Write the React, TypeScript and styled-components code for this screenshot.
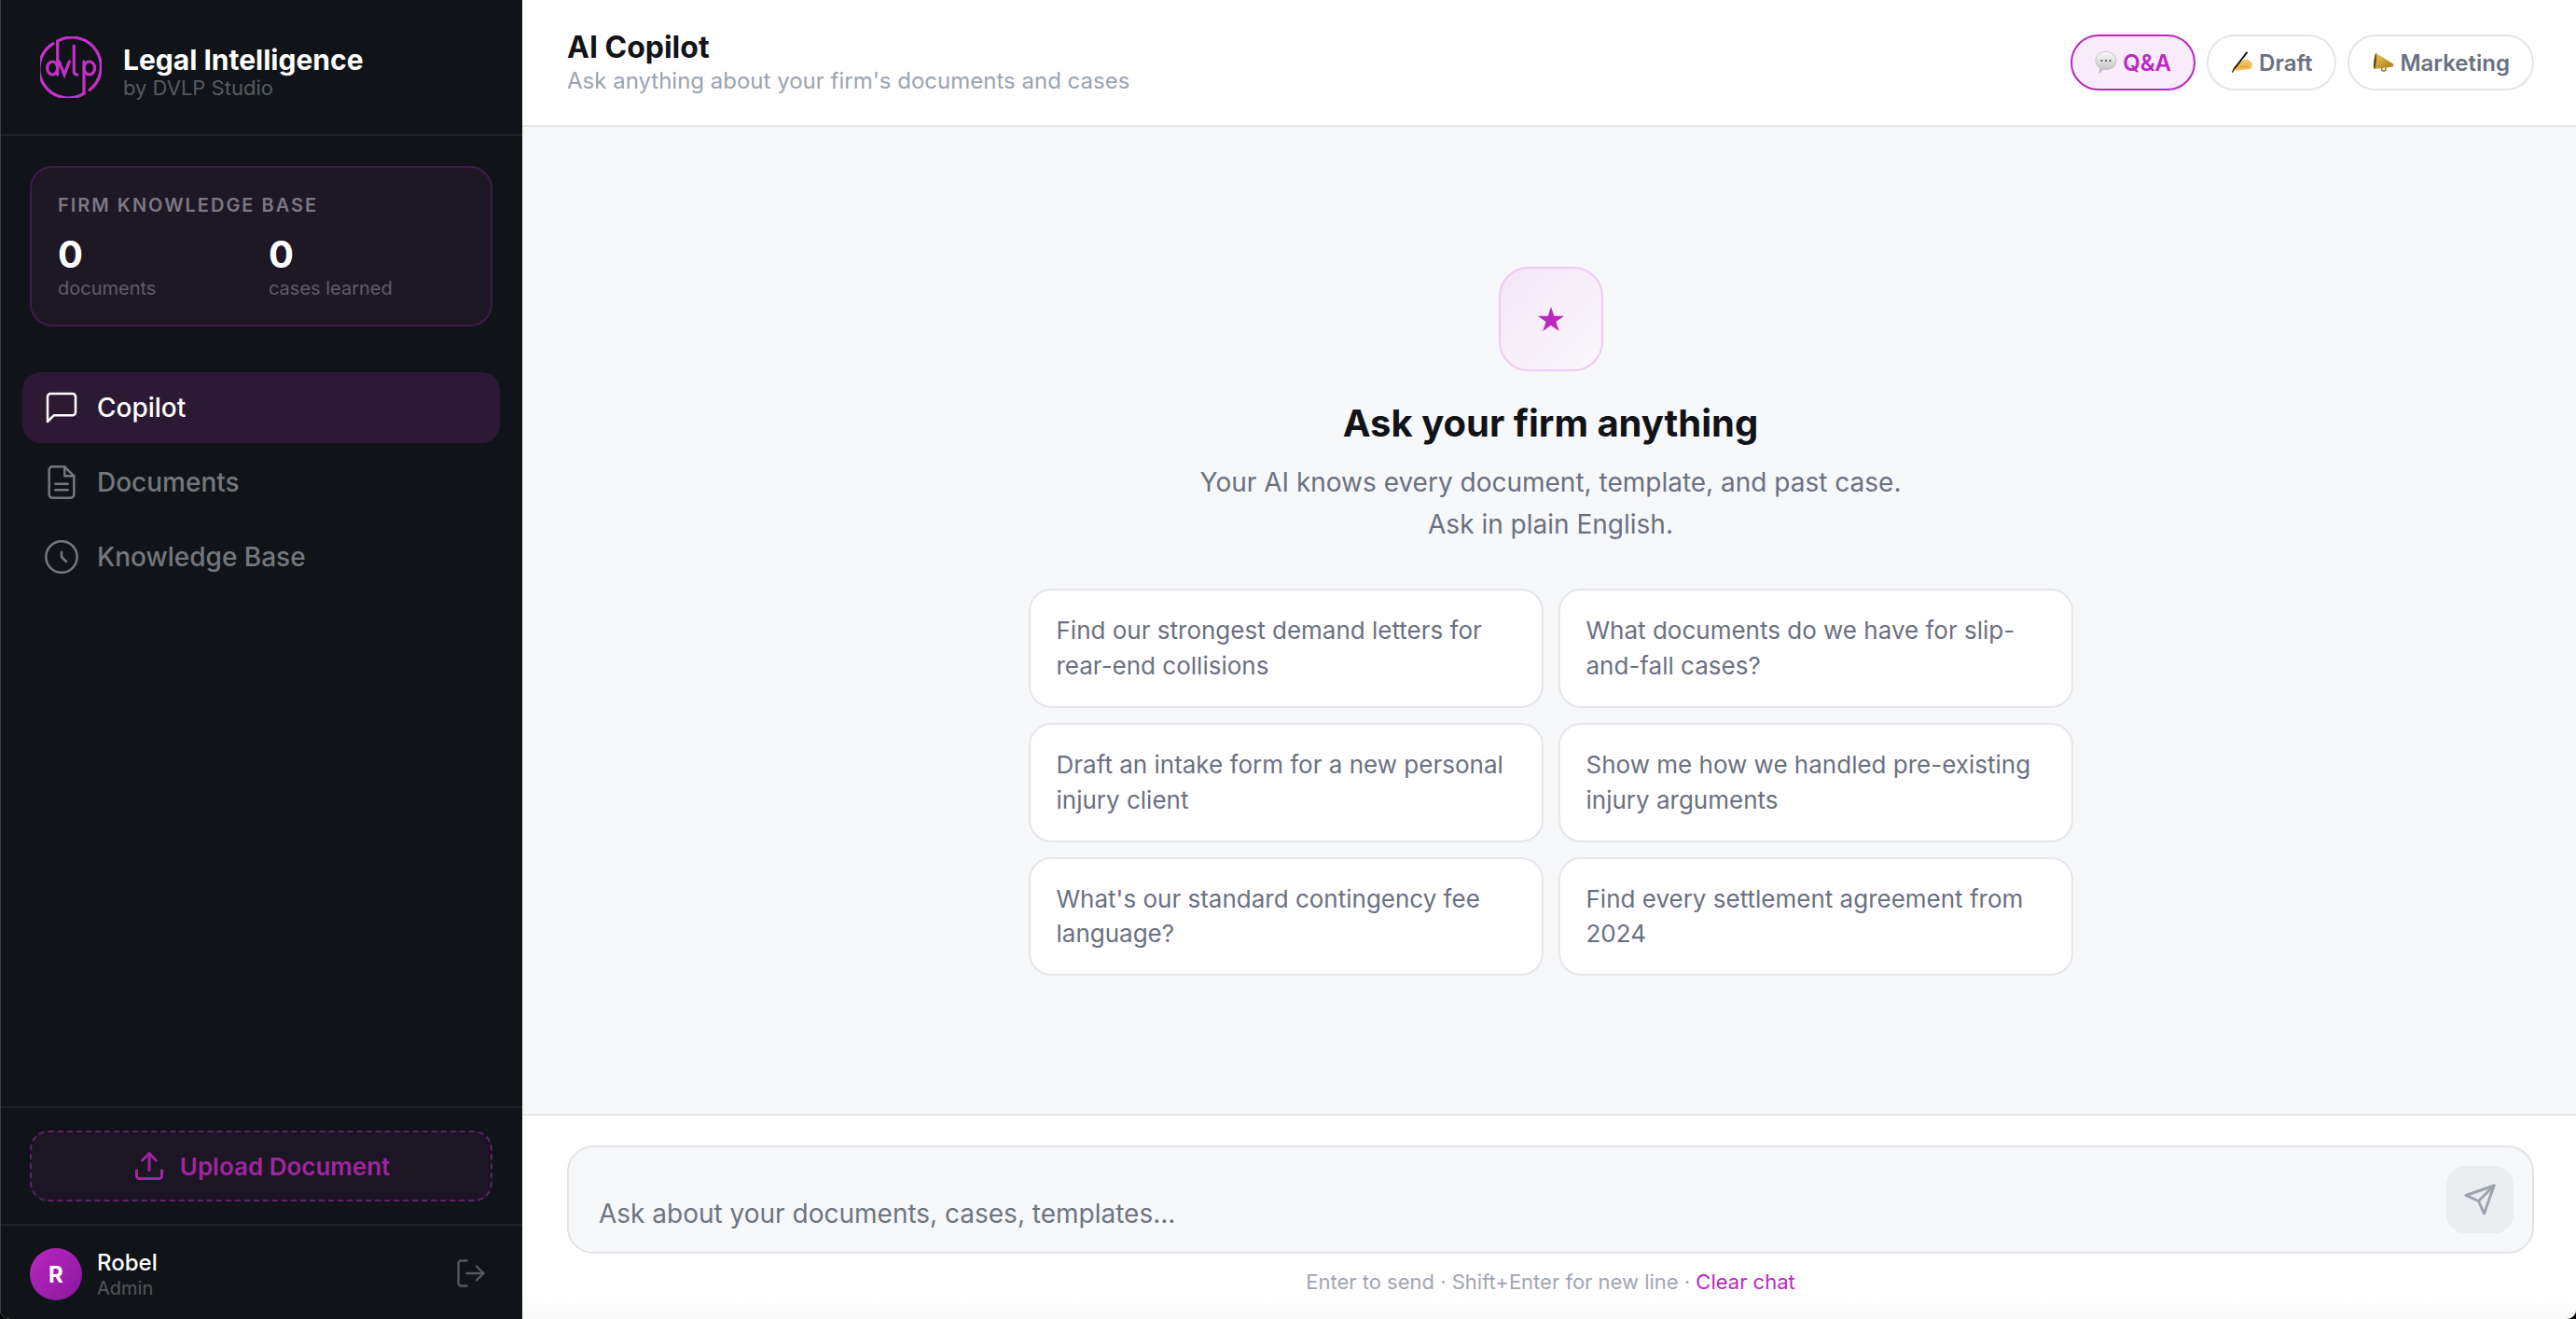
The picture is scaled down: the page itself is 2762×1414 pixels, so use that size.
import styled, { createGlobalStyle } from "styled-components";

const GlobalStyle = createGlobalStyle`
  * {
    box-sizing: border-box;
  }

  html,
  body {
    margin: 0;
    height: 100%;
    overflow: hidden;
    background: #000;
  }

  #root {
    height: 100%;
  }

  body {
    font-family: "Inter", "Liberation Sans", sans-serif;
  }
`;

const Shell = styled.div`
  display: flex;
  height: 1414px;
  overflow: hidden;
  background: #fff;
  border-radius: 0 0 10px 10px;
`;

const Sidebar = styled.aside`
  display: flex;
  flex-direction: column;
  flex: 0 0 560px;
  background: #101418;
  border-left: 1px solid #3c3f44;
`;

const Brand = styled.div`
  display: flex;
  align-items: center;
  gap: 23px;
  height: 146px;
  padding-left: 42px;
  border-bottom: 2px solid #1e2228;
`;

const BrandText = styled.div`
  display: flex;
  flex-direction: column;
  padding-top: 8px;
`;

const BrandName = styled.div`
  font-size: 30px;
  line-height: 36px;
  font-weight: 700;
  color: #fff;
`;

const BrandSub = styled.div`
  font-size: 22px;
  line-height: 24px;
  color: #565a60;
`;

const StatsCard = styled.section`
  margin: 32px 32px 0 31px;
  height: 172px;
  padding: 28px 28px 0;
  background: #1e1724;
  border: 2px solid #401c4c;
  border-radius: 24px;
`;

const StatsLabel = styled.div`
  font-size: 20px;
  line-height: 24px;
  font-weight: 600;
  letter-spacing: 2px;
  color: #7c7884;
`;

const StatsRow = styled.div`
  display: grid;
  grid-template-columns: 226px 1fr;
  margin-top: 17px;
`;

const StatValue = styled.div`
  font-size: 40px;
  line-height: 48px;
  font-weight: 700;
  color: #fff;
`;

const StatCaption = styled.div`
  font-size: 20px;
  line-height: 24px;
  color: #615c68;
`;

const Nav = styled.nav`
  display: flex;
  flex-direction: column;
  gap: 4px;
  flex: 1;
  margin-top: 49px;
  padding: 0 24px 0 23px;
`;

const NavItem = styled.a<{ $active?: boolean }>`
  display: flex;
  align-items: center;
  gap: 18px;
  height: 76px;
  padding-left: 22px;
  border-radius: 20px;
  font-size: 28px;
  font-weight: 500;
  color: ${(p) => (p.$active ? "#fff" : "#75787d")};
  background: ${(p) => (p.$active ? "#2c1a34" : "transparent")};
`;

const UploadSection = styled.div`
  padding: 24px 32px 24px 31px;
  border-top: 2px solid #1e2228;
`;

const UploadButton = styled.button`
  display: flex;
  align-items: center;
  justify-content: center;
  gap: 15px;
  width: 100%;
  height: 76px;
  padding: 0;
  background: #1c1624;
  border: 2px dashed #5e2268;
  border-radius: 20px;
  font-family: inherit;
  font-size: 26px;
  font-weight: 600;
  color: #a0259f;
`;

const UserRow = styled.div`
  display: flex;
  align-items: center;
  gap: 16px;
  padding: 24px 37px 20px 31px;
  border-top: 2px solid #1e2228;
`;

const Avatar = styled.div`
  display: flex;
  align-items: center;
  justify-content: center;
  width: 56px;
  height: 56px;
  border-radius: 50%;
  background: linear-gradient(135deg, #bb27bf, #86189f);
  font-size: 24px;
  font-weight: 700;
  color: #fff;
`;

const UserText = styled.div`
  flex: 1;
`;

const UserName = styled.div`
  font-size: 24px;
  line-height: 30px;
  font-weight: 500;
  color: #fff;
`;

const UserRole = styled.div`
  font-size: 20px;
  line-height: 24px;
  color: #54575c;
`;

const LogoutIcon = styled.span`
  display: flex;
  margin-bottom: 3px;
  color: #55585d;
`;

const Main = styled.main`
  display: flex;
  flex-direction: column;
  flex: 1;
  min-width: 0;
`;

const Header = styled.header`
  display: flex;
  align-items: center;
  justify-content: space-between;
  height: 136px;
  padding: 0 45px 0 48px;
  background: #fff;
  border-bottom: 2px solid #e5e6ea;
`;

const PageTitle = styled.h1`
  margin: 0;
  font-size: 32px;
  line-height: 40px;
  font-weight: 700;
  color: #111318;
`;

const PageSub = styled.p`
  margin: 0;
  font-size: 24px;
  line-height: 32px;
  color: #9ca3af;
`;

const ModeTabs = styled.div`
  display: flex;
  gap: 12px;
`;

const ModeTab = styled.button<{ $active?: boolean }>`
  display: flex;
  align-items: center;
  gap: 6px;
  height: 60px;
  padding: 0 24px;
  border-radius: 30px;
  font-family: inherit;
  font-size: 24px;
  font-weight: 600;
  color: ${(p) => (p.$active ? "#bb27bf" : "#6b7080")};
  background: ${(p) => (p.$active ? "#f8ecfb" : "#fff")};
  border: 2px solid ${(p) => (p.$active ? "#bb27bf" : "#e4e5ea")};
`;

const Welcome = styled.div`
  display: flex;
  flex-direction: column;
  align-items: center;
  justify-content: center;
  flex: 1;
  padding: 2px 0 0 3px;
  background: #f7f8fa;
`;

const StarTile = styled.div`
  display: flex;
  align-items: center;
  justify-content: center;
  width: 112px;
  height: 112px;
  background: linear-gradient(135deg, #f3e6f7, #fbf8fc);
  border: 2px solid #eecbf0;
  border-radius: 32px;
`;

const Heading = styled.h2`
  margin: 32px 0 0;
  font-size: 40px;
  line-height: 48px;
  font-weight: 700;
  color: #111318;
`;

const Lead = styled.p`
  margin: 17px 0 0;
  font-size: 28px;
  line-height: 44.8px;
  text-align: center;
  color: #6b7080;
`;

const Suggestions = styled.div`
  display: grid;
  grid-template-columns: 1fr 1fr;
  gap: 16px;
  width: 1120px;
  margin-top: 47px;
`;

const Suggestion = styled.button`
  padding: 24px 28px;
  background: #fff;
  border: 2px solid #e5e6ea;
  border-radius: 24px;
  font-family: inherit;
  font-size: 26px;
  line-height: 37.8px;
  text-align: left;
  color: #6b7080;
`;

const Composer = styled.footer`
  padding: 32px 45px 0 48px;
  height: 220px;
  background: linear-gradient(#fff 88%, #fafafa);
  border-top: 2px solid #e5e6ea;
`;

const InputBox = styled.div`
  display: flex;
  align-items: flex-end;
  gap: 16px;
  height: 116px;
  padding: 20px 20px 20px 32px;
  background: #f7f8fa;
  border: 2px solid #e3e4e8;
  border-radius: 28px;
`;

const Input = styled.textarea`
  flex: 1;
  height: 44px;
  padding: 3px 0 0;
  border: 0;
  outline: 0;
  resize: none;
  background: transparent;
  font-family: inherit;
  font-size: 28px;
  line-height: 41px;
  color: #111318;

  &::placeholder {
    color: #6f7480;
    opacity: 1;
  }
`;

const SendButton = styled.button`
  display: flex;
  align-items: center;
  justify-content: center;
  flex: 0 0 72px;
  height: 72px;
  padding: 0;
  border: 0;
  border-radius: 20px;
  background: #ecedf1;
  color: #9ca3af;
`;

const Hint = styled.div`
  margin-top: 16px;
  font-size: 22px;
  line-height: 28px;
  text-align: center;
  color: #a2a5b1;
`;

const ClearLink = styled.a`
  color: #bb27bf;
`;

type IconProps = { size: number; width?: number; children: React.ReactNode };

function Icon({ size, width = 1.5, children }: IconProps) {
  return (
    <svg
      width={size}
      height={size}
      viewBox="0 0 24 24"
      fill="none"
      stroke="currentColor"
      strokeWidth={width}
      strokeLinecap="round"
      strokeLinejoin="round"
    >
      {children}
    </svg>
  );
}

function DvlpLogo() {
  return (
    <svg width="66" height="66" viewBox="0 0 66 66" fill="none" stroke="#c630c8" strokeWidth="3.2" strokeLinecap="round">
      <path d="M13.800 7.800A31.400 31.400 0 0 0 47 61.200" />
      <path d="M18.700 5A31.400 31.400 0 0 1 53 57.400" />
      <path d="M18.700 5V41" />
      <ellipse cx="13.200" cy="34" rx="5.500" ry="7" />
      <path d="M20.300 27 26 41l5.300-14" />
      <path d="M36.300 10v28a3 3 0 0 0 3.400 3" />
      <path d="M47 27v34.200" />
      <ellipse cx="52.800" cy="34" rx="5.800" ry="7" />
    </svg>
  );
}

function BubbleEmoji() {
  return (
    <svg width="24" height="26" viewBox="0 0 24 26">
      <defs>
        <linearGradient id="bubble" x1="0" y1="0" x2="0" y2="1">
          <stop offset="0" stopColor="#fbfbfb" />
          <stop offset="1" stopColor="#bdbdbd" />
        </linearGradient>
      </defs>
      <path d="M12 1.500c6.300 0 11 4 11 9.500s-4.700 9.500-11 9.500c-1 0-2-.1-3-.3-1.200 1.800-2.800 3.300-4.600 3.800 .8-1.400 1.200-3 1-5.200C2.700 17 1 14.300 1 11 1 5.500 5.700 1.500 12 1.500z" fill="url(#bubble)" stroke="#b5b5b5" strokeWidth=".8" />
      <circle cx="7.500" cy="11" r="1.100" fill="#444" />
      <circle cx="12" cy="11" r="1.100" fill="#444" />
      <circle cx="16.500" cy="11" r="1.100" fill="#444" />
    </svg>
  );
}

function WritingHandEmoji() {
  return (
    <svg width="24" height="26" viewBox="0 0 26 26">
      <path d="M4 18.500C6 15 9 13 12.500 12l3-2.500c2.500-.4 7 1.500 8.500 4 1.200 2.500.6 5.800-1.500 7L5 22.500c-3.500 0-4-2.800-1-4z" fill="#f2bd55" />
      <path d="M9 18.500c3-.8 7-1 11-.5" stroke="#c98a2a" strokeWidth=".9" fill="none" />
      <path d="M18.500 1.500 5 19" stroke="#111" strokeWidth="2" fill="none" strokeLinecap="round" />
      <path d="M5 18 1.500 24.500" stroke="#111" strokeWidth="1.200" fill="none" />
    </svg>
  );
}

function MegaphoneEmoji() {
  return (
    <svg width="24" height="24" viewBox="0 0 26 24">
      <defs>
        <linearGradient id="horn" x1="0" y1="0" x2="1" y2="1">
          <stop offset="0" stopColor="#f3cc55" />
          <stop offset="1" stopColor="#a67a16" />
        </linearGradient>
      </defs>
      <path d="M12 17l-.5 3.500c0 1.500 3.800 1.800 4.200.4l.8-3" fill="none" stroke="#8c6a1b" strokeWidth="1.500" />
      <path d="M4.500 1 25 13.500V17L3 19.500C1 19.500 2.500 9 4.500 1z" fill="url(#horn)" />
      <path d="M4.500 1C6.500 2 5.500 17.500 3 19.500 1 19 2.500 8 4.500 1z" fill="#6b4c0c" />
    </svg>
  );
}

const suggestions = [
  "Find our strongest demand letters for rear-end collisions",
  "What documents do we have for slip-and-fall cases?",
  "Draft an intake form for a new personal injury client",
  "Show me how we handled pre-existing injury arguments",
  "What's our standard contingency fee language?",
  "Find every settlement agreement from 2024",
];

export default function App() {
  return (
    <>
      <GlobalStyle />
      <Shell>
        <Sidebar>
          <Brand>
            <DvlpLogo />
            <BrandText>
              <BrandName>Legal Intelligence</BrandName>
              <BrandSub>by DVLP Studio</BrandSub>
            </BrandText>
          </Brand>

          <StatsCard>
            <StatsLabel>FIRM KNOWLEDGE BASE</StatsLabel>
            <StatsRow>
              <div>
                <StatValue>0</StatValue>
                <StatCaption>documents</StatCaption>
              </div>
              <div>
                <StatValue>0</StatValue>
                <StatCaption>cases learned</StatCaption>
              </div>
            </StatsRow>
          </StatsCard>

          <Nav>
            <NavItem $active>
              <Icon size={40}>
                <path d="M21 15a2 2 0 0 1-2 2H7l-4 4V5a2 2 0 0 1 2-2h14a2 2 0 0 1 2 2z" />
              </Icon>
              Copilot
            </NavItem>
            <NavItem>
              <Icon size={40}>
                <path d="M14 2H6a2 2 0 0 0-2 2v16a2 2 0 0 0 2 2h12a2 2 0 0 0 2-2V8z" />
                <path d="M14 2v6h6" />
                <path d="M16 13H8" />
                <path d="M16 17H8" />
              </Icon>
              Documents
            </NavItem>
            <NavItem>
              <Icon size={40}>
                <circle cx="12" cy="12" r="10" />
                <path d="M12 9v3l3 3" />
              </Icon>
              Knowledge Base
            </NavItem>
          </Nav>

          <UploadSection>
            <UploadButton>
              <Icon size={36} width={2}>
                <path d="M21 15v4a2 2 0 0 1-2 2H5a2 2 0 0 1-2-2v-4" />
                <path d="m17 8-5-5-5 5" />
                <path d="M12 3v12" />
              </Icon>
              Upload Document
            </UploadButton>
          </UploadSection>

          <UserRow>
            <Avatar>R</Avatar>
            <UserText>
              <UserName>Robel</UserName>
              <UserRole>Admin</UserRole>
            </UserText>
            <LogoutIcon>
              <Icon size={36} width={1.6}>
                <path d="M9 21H5a2 2 0 0 1-2-2V5a2 2 0 0 1 2-2h4" />
                <path d="m16 17 5-5-5-5" />
                <path d="M21 12H9" />
              </Icon>
            </LogoutIcon>
          </UserRow>
        </Sidebar>

        <Main>
          <Header>
            <div>
              <PageTitle>AI Copilot</PageTitle>
              <PageSub>Ask anything about your firm's documents and cases</PageSub>
            </div>
            <ModeTabs>
              <ModeTab $active>
                <BubbleEmoji />
                Q&amp;A
              </ModeTab>
              <ModeTab>
                <WritingHandEmoji />
                Draft
              </ModeTab>
              <ModeTab>
                <MegaphoneEmoji />
                Marketing
              </ModeTab>
            </ModeTabs>
          </Header>

          <Welcome>
            <StarTile>
              <svg width="28" height="26" viewBox="0 0 28 26">
                <path d="M14 0l3.300 9.800H28l-8.600 6.200L22.700 26 14 19.800 5.300 26l3.300-10L0 9.800h10.700z" fill="#bb27bf" />
              </svg>
            </StarTile>
            <Heading>Ask your firm anything</Heading>
            <Lead>
              Your AI knows every document, template, and past case.
              <br />
              Ask in plain English.
            </Lead>
            <Suggestions>
              {suggestions.map((text) => (
                <Suggestion key={text}>{text}</Suggestion>
              ))}
            </Suggestions>
          </Welcome>

          <Composer>
            <InputBox>
              <Input rows={1} placeholder="Ask about your documents, cases, templates..." />
              <SendButton>
                <Icon size={36} width={2}>
                  <path d="m22 2-7 20-4-9-9-4Z" />
                  <path d="M22 2 11 13" />
                </Icon>
              </SendButton>
            </InputBox>
            <Hint>
              Enter to send · Shift+Enter for new line · <ClearLink>Clear chat</ClearLink>
            </Hint>
          </Composer>
        </Main>
      </Shell>
    </>
  );
}
